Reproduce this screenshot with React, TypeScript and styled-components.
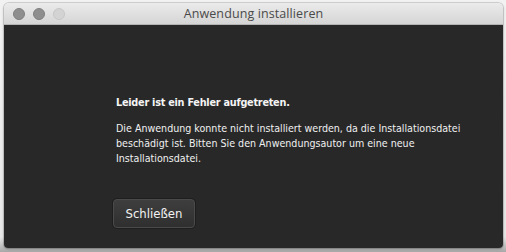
import styled, { createGlobalStyle } from 'styled-components';

const GlobalStyle = createGlobalStyle`
	html, body {
		margin: 0;
		padding: 0;
		background: #ececec;
	}
	body {
		width: 506px;
		height: 252px;
		overflow: hidden;
		font-family: 'DejaVu Sans Condensed', Roboto, sans-serif;
	}
`;

const Desktop = styled.div`
	width: 506px;
	height: 252px;
	box-sizing: border-box;
	padding: 3px 3px 4px 4px;
	background: linear-gradient(to bottom, #f2f2f2 0%, #e8e8e8 94%, #a8a8a8 100%);
`;

const Window = styled.div`
	display: flex;
	flex-direction: column;
	height: 100%;
	border-radius: 5px 5px 4px 4px;
	overflow: hidden;
	box-shadow: 0 0 0 1px rgba(0, 0, 0, 0.12), 0 1px 3px rgba(0, 0, 0, 0.25);
`;

const TitleBar = styled.div`
	position: relative;
	height: 21px;
	display: flex;
	align-items: center;
	justify-content: center;
	background: linear-gradient(to bottom, #ebebeb, #d5d5d5);
	border-bottom: 1px solid #b4b4b4;
`;

const Lights = styled.div`
	position: absolute;
	left: 9px;
	top: 5px;
	display: flex;
	gap: 8px;
`;

const Light = styled.span<{ $dim?: boolean }>`
	width: 12px;
	height: 12px;
	border-radius: 50%;
	box-sizing: border-box;
	background: ${(p) => (p.$dim ? '#d3d3d3' : '#8e8e8e')};
	border: 1px solid ${(p) => (p.$dim ? '#c6c6c6' : '#7f7f7f')};
`;

const Title = styled.span`
	font-family: 'Open Sans', 'DejaVu Sans', sans-serif;
	font-size: 12.5px;
	color: #4a4a4a;
	letter-spacing: 0.1px;
`;

const Body = styled.div`
	flex: 1;
	background: #282828;
	padding: 70px 20px 0 112px;
	display: flex;
	flex-direction: column;
`;

const Heading = styled.div`
	font-size: 10.8px;
	font-weight: 700;
	color: #f4f4f4;
	line-height: 15px;
	letter-spacing: -0.25px;
`;

const Message = styled.p`
	margin: 11px 0 0;
	font-size: 10.6px;
	color: #f0f0f0;
	line-height: 15px;
	white-space: nowrap;
`;

const Button = styled.button`
	margin-top: 33px;
	align-self: flex-start;
	margin-left: -3px;
	width: 82px;
	height: 29px;
	border-radius: 4px;
	border: 1px solid #4a4a4a;
	background: linear-gradient(to bottom, #3e3e3e, #2f2f2f);
	color: #f2f2f2;
	font-family: 'DejaVu Sans Condensed', Roboto, sans-serif;
	font-size: 13px;
	padding: 0;
	box-shadow: 0 0 0 1px #1e1e1e;
`;

export default function App() {
	return (
		<>
			<GlobalStyle />
			<Desktop>
				<Window>
					<TitleBar>
						<Lights>
							<Light />
							<Light />
							<Light $dim />
						</Lights>
						<Title>Anwendung installieren</Title>
					</TitleBar>
					<Body>
						<Heading>Leider ist ein Fehler aufgetreten.</Heading>
						<Message>
							Die Anwendung konnte nicht installiert werden, da die Installationsdatei
							<br />
							beschädigt ist. Bitten Sie den Anwendungsautor um eine neue
							<br />
							Installationsdatei.
						</Message>
						<Button>Schließen</Button>
					</Body>
				</Window>
			</Desktop>
		</>
	);
}
